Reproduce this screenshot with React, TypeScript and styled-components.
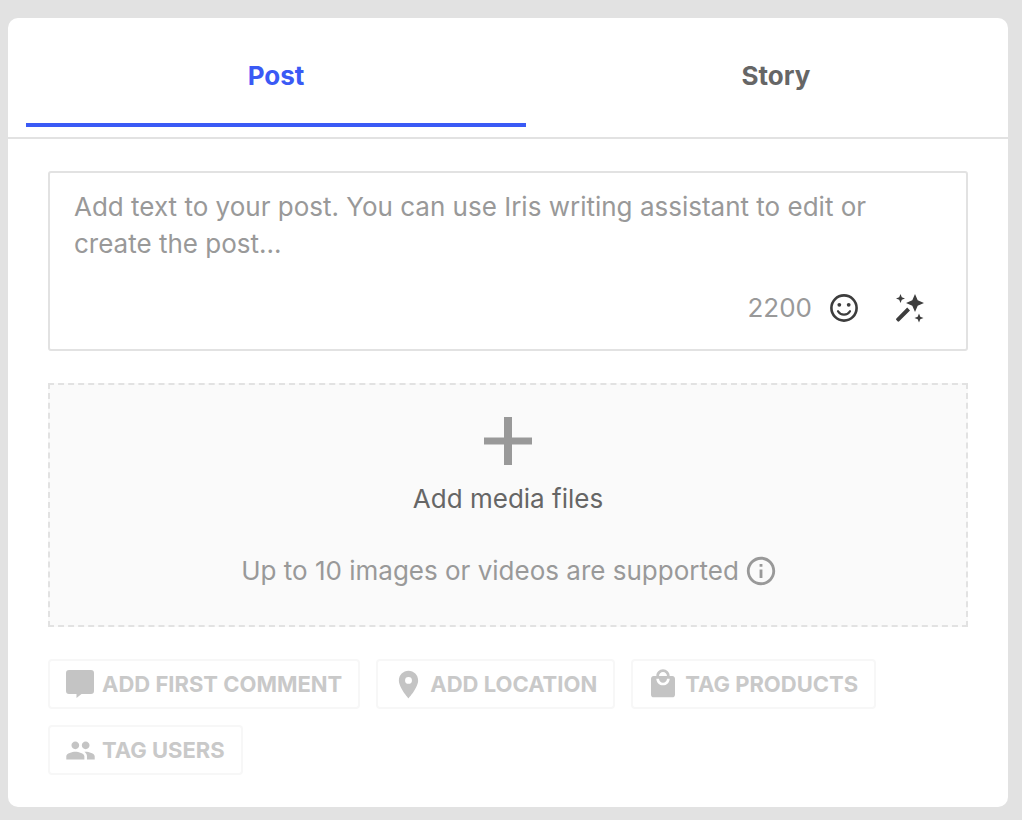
import React from "react";
import styled, { createGlobalStyle } from "styled-components";
import { MdInfoOutline, MdLocalMall, MdPeople, MdPlace } from "react-icons/md";

const GlobalStyle = createGlobalStyle`
  html, body {
    margin: 0;
    padding: 0;
    background: #e2e2e2;
  }
  * {
    box-sizing: border-box;
  }
`;

const SmileIcon = () => (
  <svg width="30" height="30" viewBox="0 0 30 30" fill="none">
    <circle cx="15" cy="15" r="12.6" stroke="#3d3d3d" strokeWidth="2.6" />
    <circle cx="10.3" cy="11.8" r="1.9" fill="#3d3d3d" />
    <circle cx="19.7" cy="11.8" r="1.9" fill="#3d3d3d" />
    <path d="M9 18.2c1.3 2.2 3.4 3.4 6 3.4s4.7-1.2 6-3.4" stroke="#3d3d3d" strokeWidth="2.2" strokeLinecap="round" />
  </svg>
);

const WandIcon = () => (
  <svg width="30" height="30" viewBox="0 0 30 30" fill="#3d3d3d">
    <path d="M20 1l2.7 6.3L29 10l-6.3 2.7L20 19l-2.7-6.3L11 10l6.3-2.7z" />
    <path d="M5.5 1l1.3 3.2L10 5.5 6.8 6.8 5.5 10 4.2 6.8 1 5.5l3.2-1.3z" />
    <path d="M24 20.5l1.3 3.2 3.2 1.3-3.2 1.3-1.3 3.2-1.3-3.2-3.2-1.3 3.2-1.3z" />
    <path d="M12.2 14.6l2.8 2.8L4.2 28.2a1.2 1.2 0 0 1-1.7 0l-1.1-1.1a1.2 1.2 0 0 1 0-1.7z" />
  </svg>
);

const PlusIcon = () => (
  <svg width="48" height="48" viewBox="0 0 48 48" fill="#999999">
    <rect x="20" y="0" width="8" height="48" />
    <rect x="0" y="20.5" width="48" height="7" />
  </svg>
);

const BubbleIcon = () => (
  <svg width="28" height="28" viewBox="0 0 28 28" fill="#c4c4c4">
    <path d="M3 0h22a3 3 0 0 1 3 3v18a3 3 0 0 1-3 3H15.5l-5 4v-4H3a3 3 0 0 1-3-3V3a3 3 0 0 1 3-3z" />
  </svg>
);

const App = (): JSX.Element => (
  <Page>
    <GlobalStyle />
    <Card>
      <Tabs>
        <Tab $active>Post</Tab>
        <Tab>Story</Tab>
      </Tabs>
      <Body>
        <TextBox>
          <Placeholder>
            Add text to your post. You can use Iris writing assistant to edit or create the post...
          </Placeholder>
          <TextFooter>
            <Counter>2200</Counter>
            <SmileIcon />
            <WandIcon />
          </TextFooter>
        </TextBox>
        <DropZone>
          <PlusIcon />
          <DropTitle>Add media files</DropTitle>
          <DropHint>
            Up to 10 images or videos are supported
            <MdInfoOutline size={34} />
          </DropHint>
        </DropZone>
        <Chips>
          <Chip>
            <ChipIcon>
              <BubbleIcon />
            </ChipIcon>
            ADD FIRST COMMENT
          </Chip>
          <Chip>
            <ChipIcon>
              <MdPlace size={33} />
            </ChipIcon>
            ADD LOCATION
          </Chip>
          <Chip>
            <ChipIcon>
              <MdLocalMall size={32} />
            </ChipIcon>
            TAG PRODUCTS
          </Chip>
          <Chip>
            <ChipIcon>
              <MdPeople size={31} />
            </ChipIcon>
            TAG USERS
          </Chip>
        </Chips>
      </Body>
    </Card>
  </Page>
);

const Page = styled.div`
  width: 1022px;
  height: 820px;
  padding: 18px 14px 13px 8px;
  font-family: Inter, "Liberation Sans", sans-serif;
  overflow: hidden;
`;

const Card = styled.div`
  height: 789px;
  background: #fff;
  border-radius: 10px;
  overflow: hidden;
`;

const Tabs = styled.div`
  display: flex;
  height: 121px;
  padding-left: 18px;
  border-bottom: 2px solid #e2e2e2;
`;

const Tab = styled.div<{ $active?: boolean }>`
  flex: 0 0 500px;
  height: 109px;
  display: flex;
  align-items: center;
  justify-content: center;
  padding-top: 10px;
  font-size: 26px;
  font-weight: 700;
  color: ${(p) => (p.$active ? "#3a5af5" : "#666")};
  border-bottom: 4px solid ${(p) => (p.$active ? "#3a5af5" : "transparent")};
`;

const Body = styled.div`
  display: flex;
  flex-direction: column;
  padding: 32px 40px 0;
`;

const TextBox = styled.div`
  height: 180px;
  display: flex;
  flex-direction: column;
  justify-content: space-between;
  padding: 15px 41px 26px 24px;
  border: 2px solid #e2e2e2;
  border-radius: 3px;
`;

const Placeholder = styled.div`
  font-size: 26px;
  line-height: 37px;
  color: #999;
`;

const TextFooter = styled.div`
  display: flex;
  align-items: center;
  justify-content: flex-end;
  gap: 17px;

  svg:last-child {
    margin-left: 19px;
  }
`;

const Counter = styled.span`
  font-size: 26px;
  line-height: 30px;
  color: #999;
`;

const DropZone = styled.div`
  height: 244px;
  margin-top: 32px;
  display: flex;
  flex-direction: column;
  align-items: center;
  padding-top: 32px;
  background: #fafafa;
  border: 2px dashed #e2e2e2;
`;

const DropTitle = styled.div`
  margin-top: 18px;
  font-size: 26px;
  line-height: 32px;
  color: #666;
`;

const DropHint = styled.div`
  display: flex;
  align-items: center;
  gap: 5px;
  margin: 38px 0 0 3px;
  font-size: 26px;
  line-height: 36px;
  color: #999;
`;

const Chips = styled.div`
  display: flex;
  flex-wrap: wrap;
  gap: 16px;
  margin-top: 32px;
`;

const Chip = styled.div`
  height: 50px;
  display: flex;
  align-items: center;
  gap: 8px;
  padding: 0 16px;
  font-size: 22px;
  font-weight: 700;
  color: #c9c9c9;
  border: 2px solid #f7f7f7;
  border-radius: 4px;
`;

const ChipIcon = styled.span`
  flex: none;
  width: 28px;
  height: 28px;
  display: flex;
  align-items: center;
  justify-content: center;
  color: #c4c4c4;

  svg {
    flex: none;
  }
`;

export default App;
